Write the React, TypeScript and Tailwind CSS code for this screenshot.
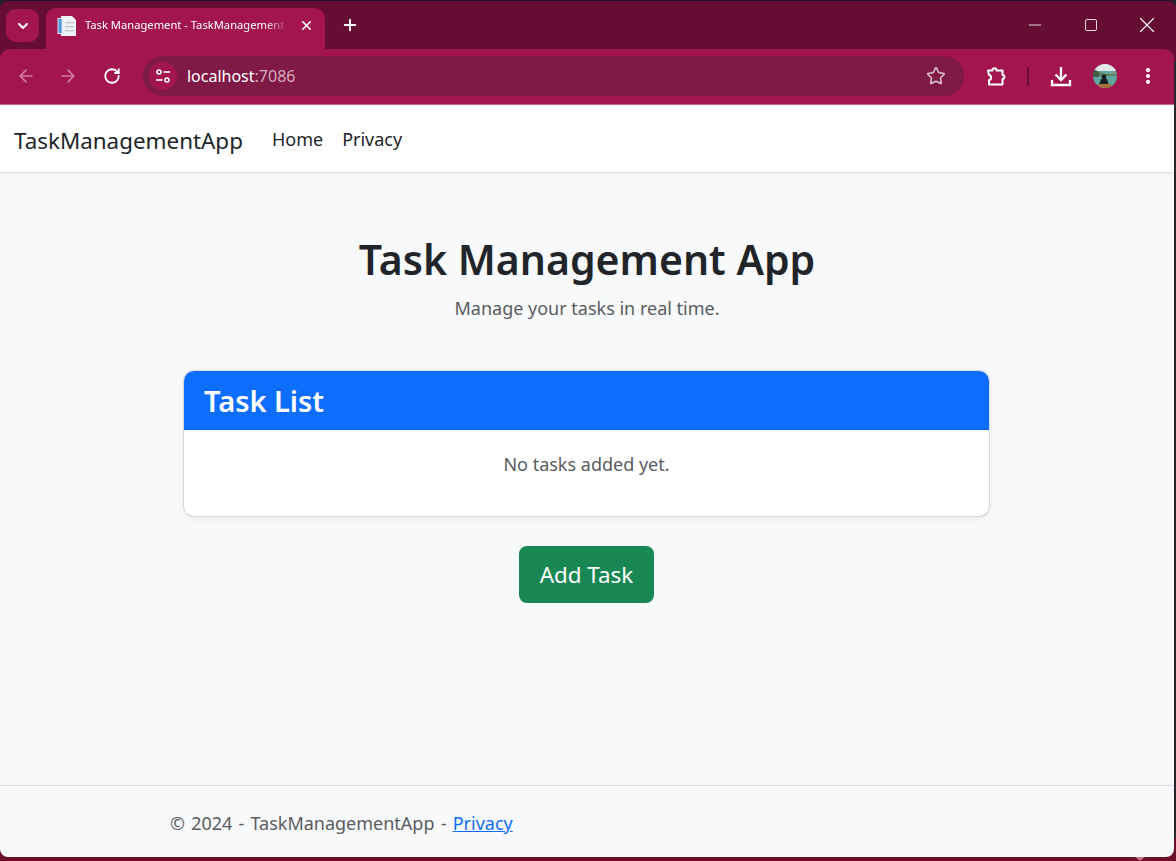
import { ArrowLeft, ArrowRight, RotateCw, ChevronDown, X, Plus, Minus, Star, EllipsisVertical } from "lucide-react"

const font = "font-['Noto_Sans','Open_Sans',sans-serif]"

function Favicon() {
    return (
        <svg width="20" height="20" viewBox="0 0 20 20" className="shrink-0">
            <path d="M4 0H15L19 4V20H4Z" fill="#f1f2f6" />
            <rect x="0.5" y="2" width="5.5" height="16" fill="#dfe6f2" />
            <rect x="1.5" y="3" width="3" height="14" fill="#4d93d6" />
            <rect x="8" y="6" width="9" height="1.4" fill="#c3c8d2" />
            <rect x="8" y="10" width="9" height="1.4" fill="#c3c8d2" />
            <rect x="8" y="14" width="9" height="1.4" fill="#c3c8d2" />
        </svg>
    )
}

function Avatar() {
    return (
        <svg width="24" height="24" viewBox="0 0 24 24" className="shrink-0">
            <clipPath id="av"><circle cx="12" cy="12" r="12" /></clipPath>
            <g clipPath="url(#av)">
                <rect width="24" height="24" fill="#5fa8a2" />
                <rect width="24" height="7" fill="#e3e8e6" />
                <path d="M0 5L7 8L12 10H24V12H0Z" fill="#5d7f63" />
                <path d="M0 4L6 9V13H0Z" fill="#3f5a48" />
                <path d="M24 6L17 10H24Z" fill="#7d9a86" />
                <circle cx="11" cy="13" r="2.4" fill="#15191c" />
                <path d="M6 21L8 15H14L16 21Z" fill="#1b2024" />
                <rect x="5" y="20" width="13" height="4" fill="#a8703c" />
            </g>
        </svg>
    )
}

function SiteInfo() {
    return (
        <svg width="18" height="18" viewBox="0 0 18 18" fill="none" stroke="white" strokeWidth="1.6">
            <circle cx="5" cy="5" r="2" />
            <path d="M9.5 5H16" />
            <path d="M2 13H8.5" />
            <circle cx="13" cy="13" r="2" />
        </svg>
    )
}

function Extension() {
    return (
        <svg width="20" height="20" viewBox="0 0 20 20" fill="none" stroke="white" strokeWidth="2" strokeLinejoin="round" className="shrink-0">
            <path d="M2 4.5H6.5C6.5 1.5 10.5 1.5 10.5 4.5H16.5V9C19 9 19 13 16.5 13V18.5H3V14C5.8 14 5.8 9 3 9Z" />
        </svg>
    )
}

function DownloadTray() {
    return (
        <svg width="22" height="22" viewBox="0 0 22 22" fill="none" stroke="white" strokeWidth="2.3" className="shrink-0">
            <path d="M11 2V15" />
            <path d="M5.5 9.5L11 15L16.5 9.5" />
            <path d="M2 15V20H20V15" />
        </svg>
    )
}

export default function App() {
    return (
        <div className={`relative w-[1176px] h-[861px] overflow-hidden flex flex-col bg-[linear-gradient(#26262a_838px,#6b1028_838px)] ${font}`}>
            {/* tab strip */}
            <div className="h-[49px] shrink-0 flex items-end pl-[6px] bg-[#650d33] border-t border-[#1c1230] rounded-t-lg">
                <div className="self-start mt-[8px] w-[33px] h-[33px] rounded-[10px] bg-[#a2154f] flex items-center justify-center">
                    <ChevronDown size={16} color="white" strokeWidth={3} />
                </div>
                <div className="ml-[7px] w-[279px] h-[41px] rounded-t-[10px] bg-[#a2154f] flex items-center pl-[11px] pr-[11px] pb-[6px]">
                    <Favicon />
                    <span className="ml-[8px] flex-1 text-[11.2px] text-white whitespace-nowrap [mask-image:linear-gradient(to_right,black_88%,transparent)]">Task Management - TaskManagement</span>
                    <X size={15} color="white" strokeWidth={2.5} className="ml-[10px]" />
                </div>
                <div className="self-start mt-[15px] ml-[16px]">
                    <Plus size={18} color="white" strokeWidth={2.5} />
                </div>
                <div className="ml-auto self-start flex items-center mt-[11px] pr-[16px]">
                    <Minus size={20} color="white" strokeWidth={1} />
                    <div className="ml-[40px] w-[12px] h-[12px] rounded-[2px] border border-[#e8d5de]" />
                    <X size={26} color="white" strokeWidth={1} className="ml-[37px]" />
                </div>
            </div>
            {/* toolbar */}
            <div className="h-[56px] shrink-0 bg-[linear-gradient(#650d33_12px,transparent_12px)]">
                <div className="h-full mr-[2px] bg-[#a2154f] rounded-t-[10px] flex items-center pl-[16px] pr-[16px] pb-[1px] border-b border-[#c46a8f]">
                    <ArrowLeft size={20} color="#d57c9f" />
                    <ArrowRight size={20} color="#d57c9f" className="ml-[22px]" />
                    <RotateCw size={18} color="white" strokeWidth={2.4} className="ml-[25px]" />
                    <div className="ml-[22px] w-[822px] h-[40px] rounded-full bg-[#7e1a45] flex items-center pl-[6px] pr-[18px]">
                        <div className="w-[28px] h-[28px] rounded-full bg-[#a2154f] flex items-center justify-center">
                            <SiteInfo />
                        </div>
                        <span className="ml-[10px] text-[16px] text-white">localhost<span className="text-[#d8a9bd]">:7086</span></span>
                        <Star size={20} color="#dcc4cf" strokeWidth={1.8} className="ml-auto" />
                    </div>
                    <div className="ml-[22px]"><Extension /></div>
                    <div className="ml-[21px] w-[2px] h-[19px] bg-[#650d33]" />
                    <div className="ml-[21px]"><DownloadTray /></div>
                    <div className="ml-[21px]"><Avatar /></div>
                    <EllipsisVertical size={20} color="white" strokeWidth={3} className="ml-[21px]" />
                </div>
            </div>
            {/* page */}
            <div className="flex-1 min-h-0 flex flex-col bg-[#f8f9fa] rounded-b-[8px] mb-[4px] mr-[2px] overflow-hidden">
                <nav className="h-[68px] shrink-0 bg-white border-b border-[#dee2e6] shadow-[0_1px_3px_rgba(0,0,0,0.05)] flex items-center pl-[14px] pt-[4px]">
                    <span className="text-[22.4px] text-[#212529]">TaskManagementApp</span>
                    <span className="ml-[29px] mb-[2px] text-[18px] text-[#212529]">Home</span>
                    <span className="ml-[19px] mb-[2px] text-[18px] text-[#212529]">Privacy</span>
                </nav>
                <main className="flex-1 flex flex-col items-center pt-[57px]">
                    <h1 className="text-[41px] leading-[58px] font-semibold text-[#212529]">Task Management App</h1>
                    <p className="mt-[7px] text-[18px] leading-[27px] text-[#595c5f]">Manage your tasks in real time.</p>
                    <div className="mt-[49px] mr-[1px] w-[805px] h-[145px] bg-white rounded-[10px] shadow-[0_0_0_1px_#d5d7da,0_2px_6px_rgba(0,0,0,0.08)] overflow-hidden">
                        <div className="h-[59px] bg-[#0d6efd] border-b border-[#0b5ed7] flex items-center pl-[20px] pt-[2px]">
                            <h2 className="text-[29px] font-semibold text-white">Task List</h2>
                        </div>
                        <p className="mt-[21px] text-center text-[18px] leading-[27px] text-[#595c5f]">No tasks added yet.</p>
                    </div>
                    <button type="button" className="mt-[30px] mr-[1px] pt-[1px] w-[135px] h-[57px] rounded-[8px] bg-[#198754] text-white text-[22.4px]">Add Task</button>
                </main>
                <footer className="h-[72px] shrink-0 border-t border-[#dee2e6] flex items-center pl-[170px] pt-[3px] text-[18px] text-[#595c5f]">
                    <span className="[word-spacing:1.5px]">© 2024 - TaskManagementApp - <a href="#" className="text-[#0d6efd] underline">Privacy</a></span>
                </footer>
            </div>
            <svg width="10" height="4" viewBox="0 0 10 4" className="absolute left-[1135px] bottom-0">
                <path d="M0 0H10L5 4Z" fill="#c9708f" />
            </svg>
        </div>
    )
}
